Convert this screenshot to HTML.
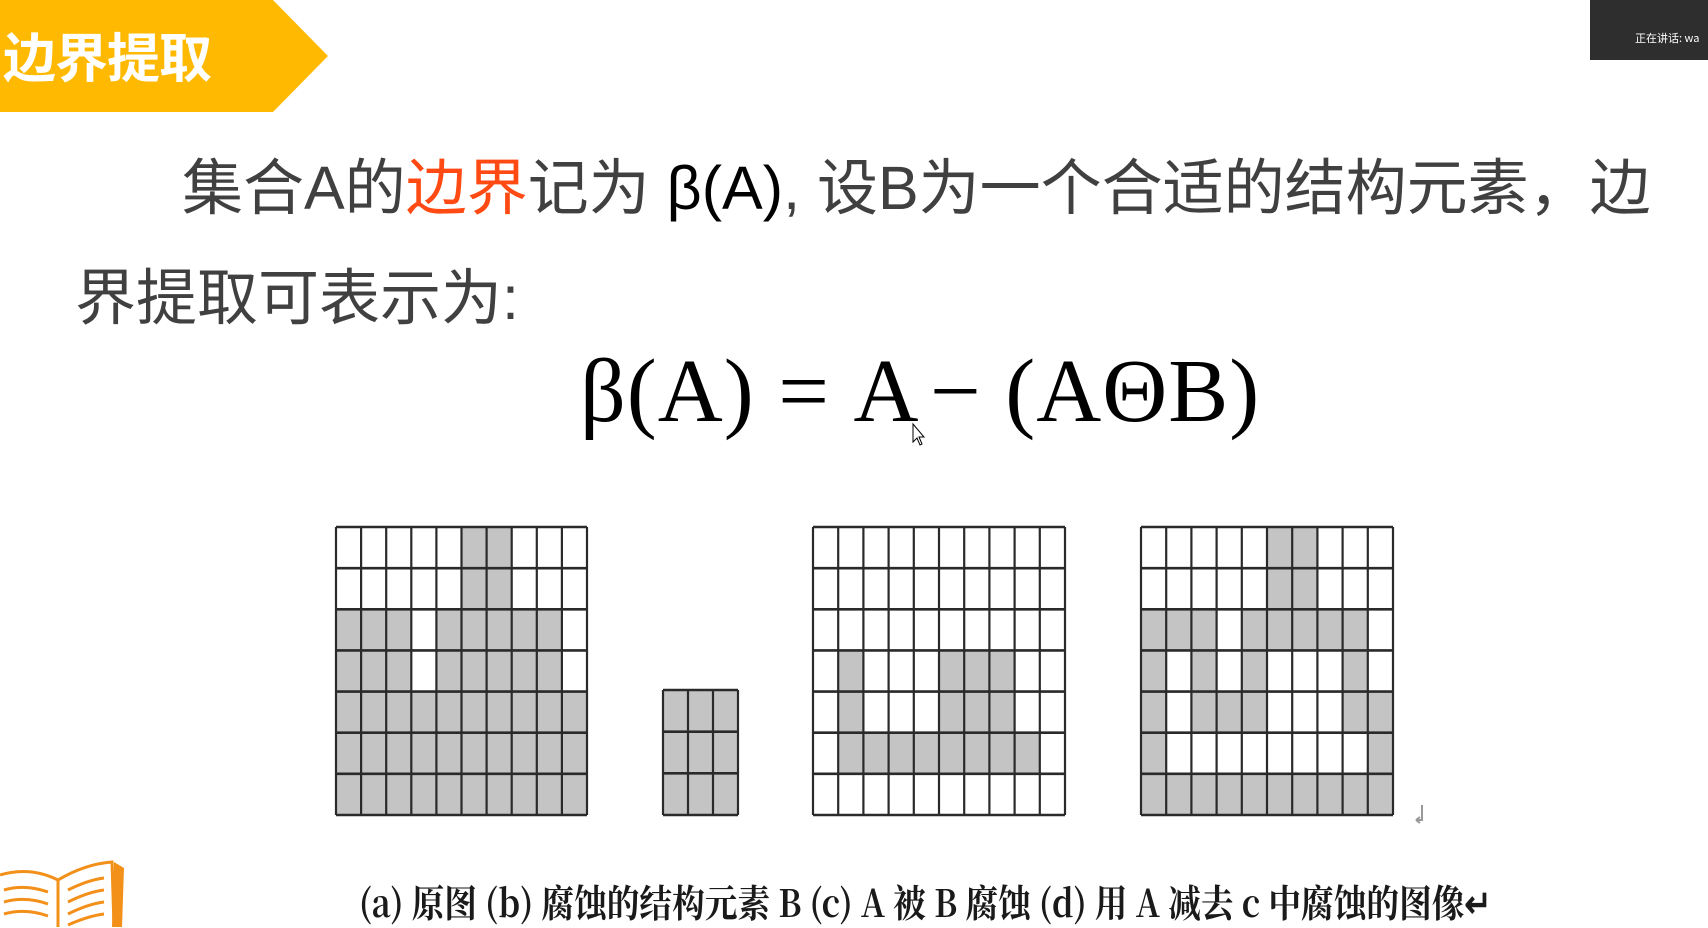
<!DOCTYPE html>
<html><head><meta charset="utf-8"><style>
html,body{margin:0;padding:0;background:#fff;}
body{width:1708px;height:927px;position:relative;overflow:hidden;font-family:"Liberation Sans","Noto Sans CJK SC",sans-serif;}
.ban{position:absolute;left:0;top:0;width:328px;height:112px;background:#FFB900;clip-path:polygon(0 0,273px 0,328px 56px,273px 112px,0 112px);}
.ban span{position:absolute;left:3px;top:20px;color:#fff;font-weight:bold;font-size:53px;line-height:70px;font-family:"Noto Sans CJK SC",sans-serif;letter-spacing:-1px;}
.p{position:absolute;color:#404040;font-size:61px;line-height:70px;font-family:"Liberation Sans","Noto Sans CJK SC",sans-serif;white-space:nowrap;}
.red{color:#FF4A14;}
.f{position:absolute;left:580px;top:342px;font-family:"Liberation Serif",serif;font-size:90px;line-height:100px;white-space:nowrap;color:#000;letter-spacing:1px;}
.cap{position:absolute;left:359px;top:876px;font-family:"Noto Serif CJK SC","Liberation Serif",serif;font-weight:bold;font-size:38px;line-height:50px;white-space:nowrap;transform-origin:0 0;transform:scaleX(0.86);color:#1a1a1a;}
.tr{position:absolute;left:1590px;top:0;width:118px;height:60px;background:#2e2e2e;}
.tr span{position:absolute;left:45px;top:30px;color:#fff;font-size:11px;font-family:"Noto Sans CJK SC",sans-serif;}
</style></head><body>
<div class="ban"><span>边界提取</span></div>
<div class="tr"><span>正在讲话: wa</span></div>
<div class="p" style="left:182px;top:153px;">集合A的<span class="red">边界</span>记为 <span style="color:#000">β(A)</span>, 设B为一个合适的结构元素，边</div>
<div class="p" style="left:75px;top:263px;">界提取可表示为:</div>
<div class="f">β(A) = A <span style="margin-left:-8px">−</span> (AΘB)</div>
<svg style="position:absolute;left:0;top:0" width="1708" height="927">
<g id="grids"></g>
<path d="M913 424 L913 442 L917 438 L920 445 L922 444 L919 437 L924 437 Z" fill="#fff" stroke="#000" stroke-width="1"/>
<path d="M1422 805 v15 h-6 M1416 820 l4 -3 M1416 820 l4 3" stroke="#999" stroke-width="2" fill="none"/>
<g stroke="#F39019" stroke-width="3" fill="none">
<path d="M0 875 Q30 866 58 880 Q85 864 112 862 L114 927"/>
<path d="M58 880 L58 927"/>
<path d="M4 890 Q25 884 48 892 M4 902 Q25 896 48 904 M4 914 Q25 908 48 916"/>
<path d="M68 890 Q88 880 104 878 M68 902 Q88 892 104 890 M68 914 Q88 904 104 902 M68 925 Q88 916 104 914"/>
</g>
<path d="M114 862 L124 868 L122 927 L112 927 Z" fill="#F39019"/>
</svg>
<div class="cap">(a) 原图 (b) 腐蚀的结构元素 B (c) A 被 B 腐蚀 (d) 用 A 减去 c 中腐蚀的图像↵</div>
<script>
function grid(x,y,w,h,rows){
  var R=rows.length,C=rows[0].length,cw=w/C,ch=h/R,s='';
  for(var r=0;r<R;r++)for(var c=0;c<C;c++){
    s+='<rect x="'+(x+c*cw)+'" y="'+(y+r*ch)+'" width="'+cw+'" height="'+ch+'" fill="'+(rows[r][c]=='1'?'#c4c4c4':'#fff')+'"/>';
  }
  for(var c=0;c<=C;c++)s+='<line x1="'+(x+c*cw)+'" y1="'+y+'" x2="'+(x+c*cw)+'" y2="'+(y+h)+'" stroke="#2a2a2a" stroke-width="2.2"/>';
  for(var r=0;r<=R;r++)s+='<line x1="'+x+'" y1="'+(y+r*ch)+'" x2="'+(x+w)+'" y2="'+(y+r*ch)+'" stroke="#2a2a2a" stroke-width="2.6"/>';
  return s;
}
var A=["0000011000","0000011000","1110111110","1110111110","1111111111","1111111111","1111111111"];
var Cg=["0000000000","0000000000","0000000000","0100011100","0100011100","0111111110","0000000000"];
var D=["0000011000","0000011000","1110111110","1010100010","1011100011","1000000001","1111111111"];
var B=["111","111","111"];
document.getElementById('grids').innerHTML=grid(336,527,251,288,A)+grid(663,690,75,125,B)+grid(813,527,252,288,Cg)+grid(1141,527,252,288,D);
</script>
</body></html>
